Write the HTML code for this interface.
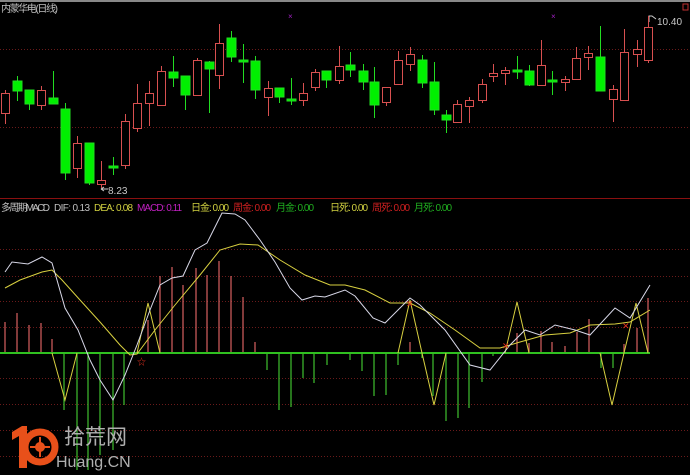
<!DOCTYPE html>
<html><head><meta charset="utf-8"><style>
html,body{margin:0;padding:0;background:#000;}
body{width:690px;height:475px;overflow:hidden;position:relative;font-family:"Liberation Sans","Noto Sans CJK SC",sans-serif;}
svg{position:absolute;left:0;top:0;}
.t{font-size:10px;}
</style></head><body>
<svg width="690" height="475" viewBox="0 0 690 475" xmlns="http://www.w3.org/2000/svg">
<rect width="690" height="475" fill="#000"/>
<line x1="0" y1="1" x2="690" y2="1" stroke="#888" stroke-width="2"/>
<g stroke="#6a1a1a" stroke-dasharray="1,2" stroke-width="1">
<line x1="0" y1="49.5" x2="690" y2="49.5"/><line x1="0" y1="127.5" x2="690" y2="127.5"/>
<line x1="0" y1="249.5" x2="690" y2="249.5"/><line x1="0" y1="276.5" x2="690" y2="276.5"/>
<line x1="0" y1="301.5" x2="690" y2="301.5"/><line x1="0" y1="327.5" x2="690" y2="327.5"/>
<line x1="0" y1="378.5" x2="690" y2="378.5"/><line x1="0" y1="404.5" x2="690" y2="404.5"/>
<line x1="0" y1="430.5" x2="690" y2="430.5"/><line x1="0" y1="456.5" x2="690" y2="456.5"/>
</g>
<line x1="0" y1="198.5" x2="690" y2="198.5" stroke="#8a1010"/>
<text x="1" y="12" fill="#c0c0c0" class="t" textLength="57">内蒙华电(日线)</text>
<rect x="683" y="4" width="5" height="6" fill="none" stroke="#c03030"/>
<text x="288" y="19" fill="#a020c0" font-size="8">×</text>
<text x="551" y="19" fill="#a020c0" font-size="8">×</text>
<path d="M649,22 V16 H652 L656,19" stroke="#ccc" fill="none"/>
<text x="657" y="25" fill="#c8c8c8" class="t">10.40</text>
<path d="M101,189 H108 M101,189 l3,-2 M101,189 l3,2" stroke="#ccc" fill="none"/>
<text x="108" y="194" fill="#c8c8c8" class="t">8.23</text>

<g stroke-width="1">
<g stroke="#d85050" fill="#000">
<line x1="5.5" y1="90" x2="5.5" y2="124"/><rect x="1.5" y="93.5" width="8" height="20"/>
<line x1="41.5" y1="86" x2="41.5" y2="110"/><rect x="37.5" y="90.5" width="8" height="15"/>
<line x1="77.5" y1="136" x2="77.5" y2="178"/><rect x="73.5" y="143.5" width="8" height="25"/>
<line x1="101.5" y1="161" x2="101.5" y2="188"/><rect x="97.5" y="180.5" width="8" height="4"/>
<line x1="125.5" y1="114" x2="125.5" y2="169"/><rect x="121.5" y="121.5" width="8" height="44"/>
<line x1="137.5" y1="84" x2="137.5" y2="132"/><rect x="133.5" y="103.5" width="8" height="25"/>
<line x1="149.5" y1="81" x2="149.5" y2="126"/><rect x="145.5" y="93.5" width="8" height="10"/>
<line x1="161.5" y1="66" x2="161.5" y2="106"/><rect x="157.5" y="71.5" width="8" height="34"/>
<line x1="197.5" y1="58" x2="197.5" y2="96"/><rect x="193.5" y="60.5" width="8" height="35"/>
<line x1="219.5" y1="24" x2="219.5" y2="89"/><rect x="215.5" y="43.5" width="8" height="32"/>
<line x1="268.5" y1="81" x2="268.5" y2="116"/><rect x="264.5" y="88.5" width="8" height="9"/>
<line x1="303.5" y1="83" x2="303.5" y2="106"/><rect x="299.5" y="93.5" width="8" height="7"/>
<line x1="315.5" y1="69" x2="315.5" y2="91"/><rect x="311.5" y="72.5" width="8" height="15"/>
<line x1="339.5" y1="46" x2="339.5" y2="84"/><rect x="335.5" y="66.5" width="8" height="14"/>
<line x1="386.5" y1="87" x2="386.5" y2="106"/><rect x="382.5" y="87.5" width="8" height="15"/>
<line x1="398.5" y1="51" x2="398.5" y2="84"/><rect x="394.5" y="60.5" width="8" height="24"/>
<line x1="410.5" y1="47" x2="410.5" y2="71"/><rect x="406.5" y="54.5" width="8" height="10"/>
<line x1="457.5" y1="100" x2="457.5" y2="123"/><rect x="453.5" y="104.5" width="8" height="18"/>
<line x1="469.5" y1="97" x2="469.5" y2="123"/><rect x="465.5" y="100.5" width="8" height="6"/>
<line x1="482.5" y1="79" x2="482.5" y2="103"/><rect x="478.5" y="84.5" width="8" height="16"/>
<line x1="493.5" y1="64" x2="493.5" y2="82"/><rect x="489.5" y="73.5" width="8" height="3"/>
<line x1="505.5" y1="67" x2="505.5" y2="85"/><rect x="501.5" y="70.5" width="8" height="3"/>
<line x1="541.5" y1="40" x2="541.5" y2="85"/><rect x="537.5" y="65.5" width="8" height="20"/>
<line x1="565.5" y1="76" x2="565.5" y2="91"/><rect x="561.5" y="79.5" width="8" height="3"/>
<line x1="576.5" y1="47" x2="576.5" y2="79"/><rect x="572.5" y="58.5" width="8" height="21"/>
<line x1="588.5" y1="46" x2="588.5" y2="70"/><rect x="584.5" y="53.5" width="8" height="4"/>
<line x1="613.5" y1="85" x2="613.5" y2="122"/><rect x="609.5" y="89.5" width="8" height="10"/>
<line x1="624.5" y1="29" x2="624.5" y2="100"/><rect x="620.5" y="52.5" width="8" height="48"/>
<line x1="637.5" y1="40" x2="637.5" y2="67"/><rect x="633.5" y="49.5" width="8" height="5"/>
<line x1="648.5" y1="16" x2="648.5" y2="63"/><rect x="644.5" y="27.5" width="8" height="33"/>
</g>
<g stroke="#22dd22" fill="#00f000">
<line x1="17.5" y1="76" x2="17.5" y2="101"/><rect x="13" y="81" width="9" height="10"/>
<line x1="29.5" y1="90" x2="29.5" y2="110"/><rect x="25" y="90" width="9" height="14"/>
<line x1="53.5" y1="71" x2="53.5" y2="104"/><rect x="49" y="98" width="9" height="6"/>
<line x1="65.5" y1="103" x2="65.5" y2="180"/><rect x="61" y="109" width="9" height="64"/>
<line x1="89.5" y1="143" x2="89.5" y2="185"/><rect x="85" y="143" width="9" height="40"/>
<line x1="113.5" y1="157" x2="113.5" y2="175"/><rect x="109" y="166" width="9" height="2"/>
<line x1="173.5" y1="56" x2="173.5" y2="87"/><rect x="169" y="72" width="9" height="6"/>
<line x1="185.5" y1="76" x2="185.5" y2="110"/><rect x="181" y="76" width="9" height="19"/>
<line x1="209.5" y1="61" x2="209.5" y2="113"/><rect x="205" y="62" width="9" height="7"/>
<line x1="231.5" y1="31" x2="231.5" y2="62"/><rect x="227" y="38" width="9" height="19"/>
<line x1="243.5" y1="44" x2="243.5" y2="83"/><rect x="239" y="60" width="9" height="2"/>
<line x1="255.5" y1="56" x2="255.5" y2="99"/><rect x="251" y="61" width="9" height="29"/>
<line x1="279.5" y1="88" x2="279.5" y2="103"/><rect x="275" y="88" width="9" height="9"/>
<line x1="291.5" y1="78" x2="291.5" y2="105"/><rect x="287" y="99" width="9" height="2"/>
<line x1="326.5" y1="71" x2="326.5" y2="88"/><rect x="322" y="71" width="9" height="9"/>
<line x1="350.5" y1="52" x2="350.5" y2="77"/><rect x="346" y="65" width="9" height="5"/>
<line x1="363.5" y1="64" x2="363.5" y2="90"/><rect x="359" y="71" width="9" height="11"/>
<line x1="374.5" y1="67" x2="374.5" y2="118"/><rect x="370" y="82" width="9" height="23"/>
<line x1="422.5" y1="55" x2="422.5" y2="88"/><rect x="418" y="60" width="9" height="23"/>
<line x1="434.5" y1="62" x2="434.5" y2="115"/><rect x="430" y="82" width="9" height="28"/>
<line x1="446.5" y1="110" x2="446.5" y2="133"/><rect x="442" y="115" width="9" height="5"/>
<line x1="517.5" y1="56" x2="517.5" y2="79"/><rect x="513" y="70" width="9" height="2"/>
<line x1="529.5" y1="65" x2="529.5" y2="86"/><rect x="525" y="71" width="9" height="14"/>
<line x1="552.5" y1="71" x2="552.5" y2="95"/><rect x="548" y="80" width="9" height="2"/>
<line x1="600.5" y1="26" x2="600.5" y2="91"/><rect x="596" y="57" width="9" height="34"/>
</g>
</g>

<text x="1" y="211" class="t" fill="#c0c0c0" textLength="49">多周期MACD</text>
<text x="54" y="211" class="t" fill="#c0c0c0" textLength="36">DIF: 0.13</text>
<text x="94" y="211" class="t" fill="#d0d040" textLength="39">DEA: 0.08</text>
<text x="137" y="211" class="t" fill="#c020c0" textLength="45">MACD: 0.11</text>
<text x="191" y="211" class="t" fill="#d0d040" textLength="38">日金: 0.00</text>
<text x="233" y="211" class="t" fill="#d02020" textLength="38">周金: 0.00</text>
<text x="276" y="211" class="t" fill="#20b020" textLength="38">月金: 0.00</text>
<text x="330" y="211" class="t" fill="#d0d040" textLength="38">日死: 0.00</text>
<text x="372" y="211" class="t" fill="#d02020" textLength="38">周死: 0.00</text>
<text x="414" y="211" class="t" fill="#20b020" textLength="38">月死: 0.00</text>

<g stroke="#d86060" stroke-width="1.2">
<line x1="5" y1="353" x2="5" y2="322"/><line x1="17" y1="353" x2="17" y2="313"/><line x1="29" y1="353" x2="29" y2="325"/>
<line x1="41" y1="353" x2="41" y2="323"/><line x1="52" y1="353" x2="52" y2="339"/>
<line x1="148" y1="353" x2="148" y2="320"/><line x1="160" y1="353" x2="160" y2="276"/><line x1="172" y1="353" x2="172" y2="267"/>
<line x1="183" y1="353" x2="183" y2="285"/><line x1="196" y1="353" x2="196" y2="268"/><line x1="207" y1="353" x2="207" y2="275"/>
<line x1="219" y1="353" x2="219" y2="261"/><line x1="231" y1="353" x2="231" y2="276"/><line x1="243" y1="353" x2="243" y2="297"/>
<line x1="255" y1="353" x2="255" y2="342"/>
<line x1="410" y1="353" x2="410" y2="342"/><line x1="517" y1="353" x2="517" y2="333"/><line x1="529" y1="353" x2="529" y2="343"/>
<line x1="541" y1="353" x2="541" y2="331"/><line x1="552" y1="353" x2="552" y2="342"/><line x1="565" y1="353" x2="565" y2="346"/>
<line x1="577" y1="353" x2="577" y2="332"/><line x1="589" y1="353" x2="589" y2="319"/><line x1="624" y1="353" x2="624" y2="344"/>
<line x1="637" y1="353" x2="637" y2="328"/><line x1="648" y1="353" x2="648" y2="298"/>
</g>
<g stroke="#40c030" stroke-width="1.2">
<line x1="64" y1="353" x2="64" y2="410"/><line x1="77" y1="353" x2="77" y2="470"/><line x1="88" y1="353" x2="88" y2="470"/>
<line x1="100" y1="353" x2="100" y2="455"/><line x1="113" y1="353" x2="113" y2="450"/><line x1="124" y1="353" x2="124" y2="405"/>
<line x1="267" y1="353" x2="267" y2="370"/><line x1="279" y1="353" x2="279" y2="410"/><line x1="291" y1="353" x2="291" y2="407"/>
<line x1="303" y1="353" x2="303" y2="378"/><line x1="314" y1="353" x2="314" y2="383"/><line x1="327" y1="353" x2="327" y2="365"/>
<line x1="350" y1="353" x2="350" y2="360"/><line x1="362" y1="353" x2="362" y2="371"/><line x1="374" y1="353" x2="374" y2="396"/>
<line x1="386" y1="353" x2="386" y2="395"/><line x1="398" y1="353" x2="398" y2="365"/><line x1="422" y1="353" x2="422" y2="358"/>
<line x1="433" y1="353" x2="433" y2="396"/><line x1="446" y1="353" x2="446" y2="421"/><line x1="458" y1="353" x2="458" y2="418"/>
<line x1="469" y1="353" x2="469" y2="408"/><line x1="482" y1="353" x2="482" y2="382"/><line x1="493" y1="353" x2="493" y2="356"/>
<line x1="601" y1="353" x2="601" y2="368"/><line x1="613" y1="353" x2="613" y2="368"/>
</g>
<line x1="0" y1="353" x2="650" y2="353" stroke="#30c020" stroke-width="2"/>

<g stroke="#d8d040" fill="none" stroke-width="1">
<polyline points="52,353 65,400 77,353"/>
<polyline points="137,353 148,303 160,353"/>
<polyline points="398,353 410,300 422,353 434,405 446,353"/>
<polyline points="505,353 517,302 529,353"/>
<polyline points="600,353 612,405 624,353 636,303 648,353"/>
</g>
<polyline fill="none" stroke="#d8d040" stroke-width="1" points="5,288 20,280 42,272 52,270 62,280 80,300 100,322 120,345 130,355 137,354 155,330 175,305 200,275 220,250 240,244 258,245 280,260 305,275 330,285 345,285 365,290 390,303 410,303 430,313 455,330 480,348 500,348 520,342 545,335 570,333 590,325 615,324 630,322 650,310"/>
<polyline fill="none" stroke="#d8d8e8" stroke-width="1" points="5,272 12,262 28,264 42,257 52,263 57,280 65,308 78,330 90,360 100,380 113,400 125,375 137,345 150,310 160,285 172,278 183,276 195,250 207,243 222,213 235,214 245,220 260,240 275,262 290,288 302,300 315,296 325,297 345,290 355,296 373,318 385,323 410,298 420,305 445,330 470,365 490,370 510,345 525,330 540,335 555,325 575,330 590,335 615,308 630,318 650,285"/>
<g fill="#e03020" font-size="9">
<text x="137" y="365">☆</text><text x="406" y="307">✕</text><text x="502" y="349">✕</text><text x="622" y="329">✕</text>
</g>

<path d="M12,432 L22,426 H27 V468 H19 V436 L12,440 Z" fill="#e8501a"/>
<circle cx="40" cy="447" r="15" fill="none" stroke="#e8501a" stroke-width="7"/>
<circle cx="40" cy="447" r="5" fill="#e8501a"/>
<g stroke="#e8501a" stroke-width="2"><line x1="40" y1="437" x2="40" y2="457"/><line x1="30" y1="447" x2="50" y2="447"/></g>
<text x="64" y="444" fill="#b0b0b0" font-size="21" font-family="Noto Sans CJK SC, sans-serif">拾荒网</text>
<text x="56" y="467" fill="#b0b0b0" font-size="16">Huang.CN</text>
</svg>
</body></html>
